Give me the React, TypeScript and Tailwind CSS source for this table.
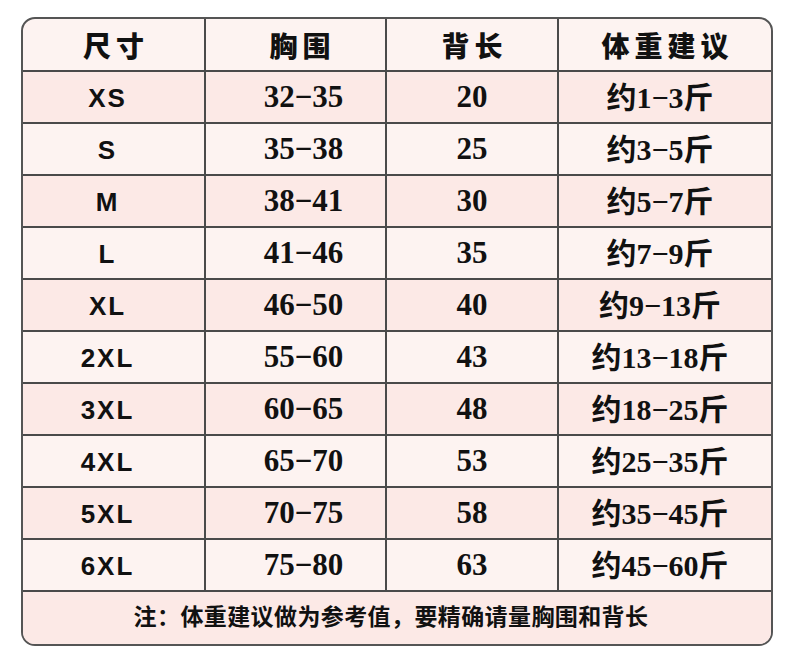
const rows = [
  ["XS", "32−35", "20", "约1−3斤"],
  ["S", "35−38", "25", "约3−5斤"],
  ["M", "38−41", "30", "约5−7斤"],
  ["L", "41−46", "35", "约7−9斤"],
  ["XL", "46−50", "40", "约9−13斤"],
  ["2XL", "55−60", "43", "约13−18斤"],
  ["3XL", "60−65", "48", "约18−25斤"],
  ["4XL", "65−70", "53", "约25−35斤"],
  ["5XL", "70−75", "58", "约35−45斤"],
  ["6XL", "75−80", "63", "约45−60斤"],
];

const serif = "font-['Liberation_Serif','Noto_Sans_CJK_SC',serif] font-bold";
const cjk = "font-['Noto_Sans_CJK_SC',sans-serif] font-black";

export default function App() {
  return (
    <div className="w-[790px] h-[663px] bg-white pt-[17px] pl-[21px] text-[#111]">
      <div className="w-[752px] border-2 border-[#555] rounded-[14px] overflow-hidden bg-[#fdf3f1]">
        {/* header */}
        <div className={`flex h-[53px] border-b-2 border-[#4a4a4a] text-[28px] tracking-[5px] ${cjk}`}>
          <div className="w-[183px] border-r-2 border-[#4a4a4a] flex items-center justify-center pl-[5px]">尺寸</div>
          <div className="w-[181px] border-r-2 border-[#4a4a4a] flex items-center justify-center pl-[14px]">胸围</div>
          <div className="w-[172px] border-r-2 border-[#4a4a4a] flex items-center justify-center pl-[5px]">背长</div>
          <div className="flex-1 flex items-center justify-center pl-[5px]">体重建议</div>
        </div>
        {rows.map((r, i) => (
          <div
            key={r[0]}
            className={`flex h-[52px] border-b-2 border-[#4a4a4a] ${i % 2 === 0 ? "bg-[#fce9e6]" : "bg-[#fdf3f1]"}`}
          >
            <div className="w-[183px] border-r-2 border-[#4a4a4a] flex items-center justify-center pt-[2px] pr-[12px] font-['Liberation_Sans',Arial,sans-serif] font-bold text-[26px] tracking-[2px]">
              {r[0]}
            </div>
            <div className={`w-[181px] border-r-2 border-[#4a4a4a] flex items-center justify-center pl-[16px] text-[31px] ${serif}`}>
              {r[1]}
            </div>
            <div className={`w-[172px] border-r-2 border-[#4a4a4a] flex items-center justify-center text-[31px] ${serif}`}>
              {r[2]}
            </div>
            <div className={`flex-1 flex items-center justify-center pr-[10px] text-[30px] ${serif}`}>
              {r[3]}
            </div>
          </div>
        ))}
        {/* note */}
        <div className={`h-[52px] bg-[#fce9e6] flex items-center justify-center pr-[12px] text-[23px] tracking-[0.4px] ${serif}`}>
          注：体重建议做为参考值，要精确请量胸围和背长
        </div>
      </div>
    </div>
  );
}
